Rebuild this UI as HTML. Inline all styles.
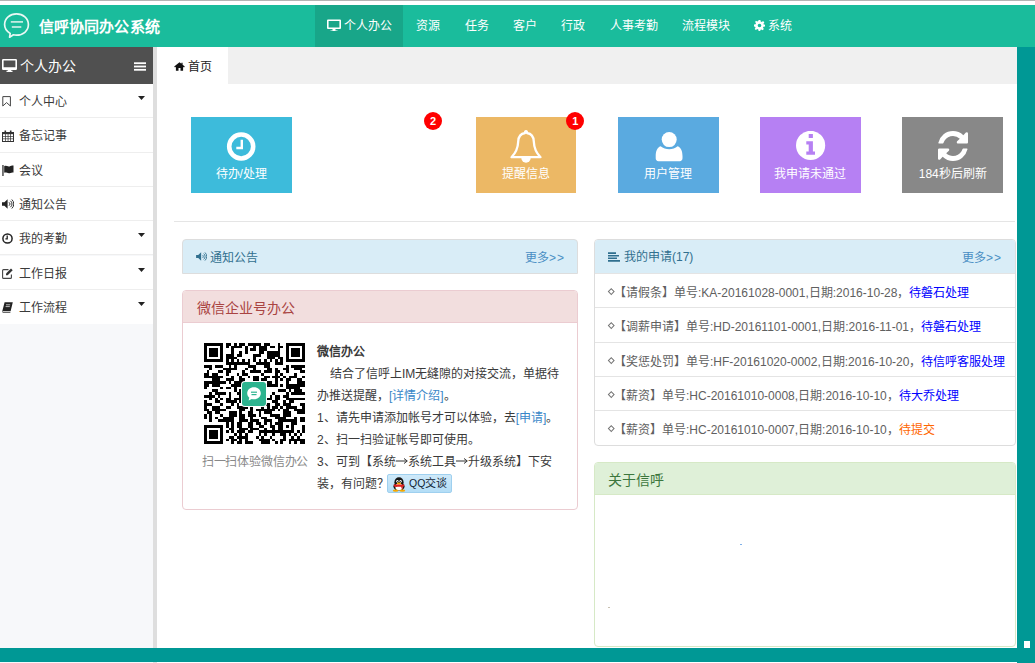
<!DOCTYPE html>
<html lang="zh-CN">
<head>
<meta charset="utf-8">
<style>
*{box-sizing:border-box;margin:0;padding:0}
html,body{width:1035px;height:663px;overflow:hidden;background:#fff;font-family:"Liberation Sans",sans-serif;font-size:12px;color:#333}
.abs{position:absolute}
#topline{left:0;top:0;width:1035px;height:1px;background:#b4b4b4}
#header{left:0;top:5px;width:1035px;height:42px;background:#1abc9c;color:#fff}
#rstrip{left:1017px;top:47px;width:18px;height:616px;background:#009895}
#bbar{left:0;top:648px;width:1017px;height:14px;background:#009895}
#side{left:0;top:47px;width:153px;height:616px;background:#f7f8fa}
#sidehd{left:0;top:47px;width:153px;height:37px;background:#505050;color:#fff}
#vstrip{left:153px;top:47px;width:4px;height:616px;background:#dedede}
#tabbar{left:157px;top:47px;width:860px;height:37px;background:#f0f0f0}
#tab1{left:157px;top:47px;width:71px;height:37px;background:#fff}
.item{position:absolute;left:0;width:153px;height:34.3px;background:#fff;border-bottom:1px solid #eee}
.tile{position:absolute;top:117.2px;width:100.8px;height:76px;color:#fff;text-align:center}
.badge{position:absolute;top:111.7px;width:18px;height:18px;border-radius:9px;background:#f00;color:#fff;font-weight:bold;font-size:11px;line-height:18px;text-align:center}
.panel{position:absolute;border:1px solid #ddd;border-radius:4px;background:#fff;overflow:hidden}
.ph{height:34px}
.more{top:1px;line-height:35px;color:#4a8fc4;font-size:12px;white-space:nowrap}
.gt{letter-spacing:1px;margin-right:-1px;font-size:12px}
.wx{line-height:22px;color:#3a3a3a;white-space:nowrap;font-size:12px}
.lk{color:#3a87c8}
.qqb{display:inline-block;vertical-align:middle;position:relative;left:-2px;top:-1px;height:19px;line-height:17px;padding:0 4px 0 21px;border:1px solid #9fd0ef;border-radius:2px;background:linear-gradient(#cfe9f9,#b3ddf6);color:#123;font-size:11px}
.li{position:absolute;left:0;width:100%;height:34.3px;border-top:1px solid #e4e4e4;line-height:38px;padding-left:19px;white-space:nowrap;font-size:12px;color:#606060}
.dm{position:absolute;left:14px;top:15px;width:4.5px;height:4.5px;border:1px solid #777;transform:rotate(45deg)}

.tlab{position:absolute;left:0;top:50px;width:100%;text-align:center;line-height:14px;font-size:12px;color:#fff;white-space:nowrap}
.itx{left:19px;top:0;height:34px;line-height:37px;font-size:12px;color:#3a3a3a;white-space:nowrap}
.nav{top:0;height:42px;line-height:42px;font-size:12px;color:#fff;white-space:nowrap}
</style>
</head>
<body>
<div id="topline" class="abs"></div>
<div id="header" class="abs">
<svg class="abs" style="left:0;top:-5px" width="36" height="47" viewBox="0 0 36 47">
<path d="M9.6 37.2 L10.2 33.4 C6.2 31.2 4.6 28 4.6 24.6 C4.6 18.2 10 13.9 16.5 13.9 C23 13.9 28.4 18.2 28.4 24.6 C28.4 31 23 35.2 16.5 35.2 C15.4 35.2 14.4 35.1 13.4 34.8 Z" fill="none" stroke="#eaf8f4" stroke-width="1.7" stroke-linejoin="round"/>
<rect x="10.8" y="21.1" width="12.2" height="1.6" fill="#d5f0ea"/>
<rect x="11.8" y="26.2" width="9.5" height="1.6" fill="#d5f0ea"/>
</svg>
<div class="abs" style="left:39px;top:1px;height:42px;line-height:42px;font-size:15px;font-weight:bold;letter-spacing:0.1px">信呼协同办公系统</div>
<div class="abs" style="left:315px;top:0;width:88px;height:42px;background:#18a689"></div>
<div class="abs nav" style="left:327px">
<svg width="14" height="12" viewBox="0 0 14 12" style="vertical-align:-1px"><path d="M1 0.5h12a1 1 0 0 1 1 1v7.5a1 1 0 0 1-1 1H8.5v1.5h2v0.8h-7v-0.8h2V10H1a1 1 0 0 1-1-1V1.5a1 1 0 0 1 1-1zM1.6 2v6.4h10.8V2z" fill="#fff"/></svg> 个人办公</div>
<div class="abs nav" style="left:416px">资源</div>
<div class="abs nav" style="left:465px">任务</div>
<div class="abs nav" style="left:513px">客户</div>
<div class="abs nav" style="left:561px">行政</div>
<div class="abs nav" style="left:610px">人事考勤</div>
<div class="abs nav" style="left:682px">流程模块</div>
<div class="abs nav" style="left:754px"><svg width="11" height="11" viewBox="0 0 12 12" style="vertical-align:-1px"><path d="M5 0h2l.3 1.7 1.2.5 1.4-1 1.4 1.4-1 1.4.5 1.2L12 5v2l-1.7.3-.5 1.2 1 1.4-1.4 1.4-1.4-1-1.2.5L7 12H5l-.3-1.7-1.2-.5-1.4 1L.7 9.9l1-1.4-.5-1.2L0 7V5l1.7-.3.5-1.2-1-1.4L2.1.7l1.4 1 1.2-.5zM6 4a2 2 0 1 0 0 4 2 2 0 0 0 0-4z" fill="#fff"/></svg> 系统</div>
</div>
<div id="side" class="abs"></div>
<div id="sidehd" class="abs">
<svg class="abs" style="left:2px;top:12px" width="15" height="13" viewBox="0 0 15 13"><path d="M1.2 0h12.6a1.2 1.2 0 0 1 1.2 1.2v8.6a1.2 1.2 0 0 1-1.2 1.2H9.2v0.8h1.3V13H4.5v-1.2h1.3V11H1.2A1.2 1.2 0 0 1 0 9.8V1.2A1.2 1.2 0 0 1 1.2 0zM1.6 1.4v6.8h11.8V1.4z" fill="#fff"/></svg>
<div class="abs" style="left:20px;top:1px;height:37px;line-height:37px;font-size:14px;color:#fff">个人办公</div>
<svg class="abs" style="left:134px;top:15px" width="12" height="9" viewBox="0 0 12 9"><rect x="0" y="0.3" width="12" height="1.8" fill="#fff"/><rect x="0" y="3.6" width="12" height="1.8" fill="#fff"/><rect x="0" y="6.9" width="12" height="1.8" fill="#fff"/></svg>
</div>
<div class="item" style="top:84.0px"><svg class="abs" style="left:2px;top:12px" width="10" height="11" viewBox="0 0 10 11"><path d="M.8 .6h7.6v9.4L4.6 6.6 .8 10z" fill="none" stroke="#444" stroke-width="1" stroke-linejoin="miter"/></svg><div class="abs itx">个人中心</div><svg class="abs" style="left:138px;top:12px" width="7" height="5" viewBox="0 0 7 5"><path d="M0 0h7L3.5 4z" fill="#222"/></svg></div>
<div class="item" style="top:118.3px"><svg class="abs" style="left:2px;top:12px" width="12" height="12" viewBox="0 0 12 12"><path d="M0 2h12v10H0z" fill="#333"/><path d="M2.5 0.5h1.6v2.5H2.5zM7.9 0.5h1.6v2.5H7.9z" fill="#333"/><g fill="#fff"><rect x="1" y="4.2" width="2.2" height="1.8"/><rect x="3.9" y="4.2" width="1.8" height="1.8"/><rect x="6.4" y="4.2" width="1.8" height="1.8"/><rect x="8.9" y="4.2" width="2.1" height="1.8"/><rect x="1" y="6.7" width="2.2" height="1.8"/><rect x="3.9" y="6.7" width="1.8" height="1.8"/><rect x="6.4" y="6.7" width="1.8" height="1.8"/><rect x="8.9" y="6.7" width="2.1" height="1.8"/><rect x="1" y="9.2" width="2.2" height="1.8"/><rect x="3.9" y="9.2" width="1.8" height="1.8"/><rect x="6.4" y="9.2" width="1.8" height="1.8"/><rect x="8.9" y="9.2" width="2.1" height="1.8"/></g></svg><div class="abs itx">备忘记事</div></div>
<div class="item" style="top:152.6px"><svg class="abs" style="left:2px;top:12px" width="12" height="11" viewBox="0 0 12 11"><rect x="0.3" y="0" width="1.3" height="11" fill="#333"/><path d="M2.2 1.2C4 0.2 5.5 1.8 7.5 1.4 9 1.1 10 0.4 11.5 0.6V7.4C10 7.4 9 8 7.5 8.2 5.5 8.5 4 7 2.2 7.8z" fill="#222"/></svg><div class="abs itx">会议</div></div>
<div class="item" style="top:186.9px"><svg class="abs" style="left:2px;top:12px" width="12" height="10" viewBox="0 0 12 10"><path d="M0 3.2h2.4L5.6 0.2v9.6L2.4 6.8H0z" fill="#222"/><path d="M7 3.3a2 2 0 0 1 0 3.4M8.4 1.8a4 4 0 0 1 0 6.4M9.8 0.5a6 6 0 0 1 0 9" fill="none" stroke="#333" stroke-width="1"/></svg><div class="abs itx">通知公告</div></div>
<div class="item" style="top:221.2px"><svg class="abs" style="left:2px;top:12px" width="11" height="11" viewBox="0 0 11 11"><circle cx="5.5" cy="5.5" r="4.6" fill="none" stroke="#222" stroke-width="1.5"/><path d="M5.2 2.6v3.3H3.4" fill="none" stroke="#222" stroke-width="1.3"/></svg><div class="abs itx">我的考勤</div><svg class="abs" style="left:138px;top:12px" width="7" height="5" viewBox="0 0 7 5"><path d="M0 0h7L3.5 4z" fill="#222"/></svg></div>
<div class="item" style="top:255.5px"><svg class="abs" style="left:2px;top:12px" width="11" height="11" viewBox="0 0 11 11"><path d="M6.5 1.6H1.5A1 1 0 0 0 .6 2.6v6.8a1 1 0 0 0 1 1h6.8a1 1 0 0 0 1-1V6.4" fill="none" stroke="#444" stroke-width="1.1"/><path d="M9 .5l1.7 1.7-5 5H4V5.5z" fill="#333"/></svg><div class="abs itx">工作日报</div><svg class="abs" style="left:138px;top:12px" width="7" height="5" viewBox="0 0 7 5"><path d="M0 0h7L3.5 4z" fill="#222"/></svg></div>
<div class="item" style="top:289.8px;border-bottom:none"><svg class="abs" style="left:2px;top:12px" width="11" height="11" viewBox="0 0 11 11"><path d="M2.6 0.3h8.2L8.6 9.2H1.2A1.3 1.3 0 0 0 .3 10.6L.2 9.4z" fill="#222"/><path d="M.6 10.7h7.8" stroke="#333" stroke-width=".9"/><path d="M4 2.8h4.2M3.6 4.6h4.2" stroke="#fff" stroke-width=".7"/></svg><div class="abs itx">工作流程</div><svg class="abs" style="left:138px;top:12px" width="7" height="5" viewBox="0 0 7 5"><path d="M0 0h7L3.5 4z" fill="#222"/></svg></div>
<div id="vstrip" class="abs"></div>
<div id="tabbar" class="abs"></div>
<div id="tab1" class="abs">
<svg class="abs" style="left:17px;top:15px" width="11" height="9" viewBox="0 0 11 9"><path d="M5.5 0.2L0.2 4.6l.8.9 .9-.8V8.8h2.6V6h2V8.8h2.6V4.7l.9.8.8-.9L8.6 2.8V.8H7.4v1z" fill="#111"/></svg>
<div class="abs" style="left:31px;top:1px;height:37px;line-height:38px;font-size:12px;color:#222">首页</div>
</div>
<div class="abs" style="left:174px;top:221px;width:841px;height:1px;background:#e5e5e5"></div>

<div class="tile" style="left:190.9px;background:#3dbbdb"><svg class="abs" style="left:35px;top:15px" width="30" height="30" viewBox="0 0 30 30"><circle cx="15.2" cy="14.5" r="12" fill="none" stroke="#fff" stroke-width="4.6"/><path d="M15.8 7.8v8.2H10.3" fill="none" stroke="#fff" stroke-width="2.4"/></svg><div class="tlab">待办/处理</div></div>
<div class="badge" style="left:424px">2</div>
<div class="tile" style="left:475.5px;background:#ecb865"><svg class="abs" style="left:33px;top:12px" width="34" height="36" viewBox="0 0 34 36"><path d="M17 2.2c-1 0-1 1.2-1 1.8C11 4.8 9.4 8 9.2 12.5 9 18 8.2 22.5 2.5 28.2h29C25.8 22.5 25 18 24.8 12.5 24.6 8 23 4.8 18 4c0-.6 0-1.8-1-1.8z" fill="none" stroke="#fff" stroke-width="2.3" stroke-linejoin="round"/><path d="M12.3 29a4.7 4.7 0 0 0 9.4 0z" fill="#fff"/></svg><div class="tlab">提醒信息</div></div>
<div class="badge" style="left:566.3px">1</div>
<div class="tile" style="left:617.8px;background:#5aaae0"><svg class="abs" style="left:37px;top:13px" width="28" height="32" viewBox="0 0 28 32"><circle cx="14.2" cy="9.6" r="7.5" fill="#fff"/><path d="M5.6 16.2C2 17.4 0.7 21.5 0.7 26v2.2c0 1.6 1.1 3 2.7 3h21.4c1.6 0 2.7-1.4 2.7-3V26c0-4.5-1.3-8.6-4.9-9.8-2.2 1.9-5.3 3-8.4 3s-6.2-1.1-8.6-3z" fill="#fff"/></svg><div class="tlab">用户管理</div></div>
<div class="tile" style="left:760.1px;background:#b680f3"><svg class="abs" style="left:35px;top:14px" width="32" height="32" viewBox="0 0 32 32"><circle cx="15.6" cy="14.4" r="14.6" fill="#fff"/><path d="M13.7 3h4.2v3.9h-4.2zM11.3 10.2h6.6v10.3h2.1v3.3h-8.7v-3.3h2.4v-7h-2.4z" fill="#b680f3"/></svg><div class="tlab">我申请未通过</div></div>
<div class="tile" style="left:902.4px;background:#888"><svg class="abs" style="left:36px;top:14px" width="30" height="30" viewBox="0 0 1536 1536"><g transform="translate(0,1408) scale(1,-1)"><path d="M1511 480q0 -5 -1 -7q-64 -268 -268 -434.5t-478 -166.5q-146 0 -282.5 55t-243.5 157l-129 -129q-19 -19 -45 -19t-45 19t-19 45v448q0 26 19 45t45 19h448q26 0 45 -19t19 -45t-19 -45l-137 -137q71 -66 161 -102t187 -36q134 0 250 65t186 179q11 17 53 117q8 23 30 23h192q13 0 22.5 -9.5t9.5 -22.5zM1536 1280v-448q0 -26 -19 -45t-45 -19h-448q-26 0 -45 19t-19 45t19 45l138 138q-148 137 -349 137q-134 0 -250 -65t-186 -179q-11 -17 -53 -117q-8 -23 -30 -23h-199q-13 0 -22.5 9.5t-9.5 22.5v7q65 268 270 434.5t480 166.5q146 0 284 -55.5t245 -156.5l130 129q19 19 45 19t45 -19t19 -45z" fill="#fff"/></g></svg><div class="tlab">184秒后刷新</div></div>

<div class="panel" style="left:182px;top:239px;width:396px;height:35px;border-color:#ddd;background:#d9edf7;border-radius:4px 4px 0 0"><svg class="abs" style="left:13px;top:12px" width="11" height="9" viewBox="0 0 12 10"><path d="M0 3.2h2.4L5.6 0.2v9.6L2.4 6.8H0z" fill="#31708f"/><path d="M7 3.3a2 2 0 0 1 0 3.4M8.4 1.8a4 4 0 0 1 0 6.4M9.8 0.5a6 6 0 0 1 0 9" fill="none" stroke="#31708f" stroke-width="1"/></svg><div class="abs" style="left:27px;top:1px;line-height:35px;color:#31708f">通知公告</div><div class="abs more" style="right:13px">更多<span class="gt">&gt;&gt;</span></div></div>
<div class="panel" style="left:182px;top:290px;width:396px;height:220px;border-color:#ebccd1"><div class="ph" style="background:#f2dede;height:32px;border-bottom:1px solid #ebccd1"><div class="abs" style="left:14px;top:1px;line-height:33px;font-size:14px;color:#a94442">微信企业号办公</div></div>
<div id="qr" class="abs" style="left:21px;top:52px;width:101px;height:101px"><svg width="101" height="101" viewBox="0 0 37 37" shape-rendering="crispEdges"><path d="M0 0h7v1h-7zM8 0h2v1h-2zM11 0h1v1h-1zM13 0h2v1h-2zM16 0h5v1h-5zM22 0h2v1h-2zM27 0h1v1h-1zM30 0h7v1h-7zM0 1h1v1h-1zM6 1h1v1h-1zM8 1h1v1h-1zM10 1h4v1h-4zM15 1h1v1h-1zM18 1h1v1h-1zM20 1h3v1h-3zM24 1h2v1h-2zM27 1h2v1h-2zM30 1h1v1h-1zM36 1h1v1h-1zM0 2h1v1h-1zM2 2h3v1h-3zM6 2h1v1h-1zM10 2h1v1h-1zM15 2h1v1h-1zM17 2h2v1h-2zM20 2h3v1h-3zM27 2h1v1h-1zM30 2h1v1h-1zM32 2h3v1h-3zM36 2h1v1h-1zM0 3h1v1h-1zM2 3h3v1h-3zM6 3h1v1h-1zM10 3h1v1h-1zM13 3h1v1h-1zM15 3h1v1h-1zM20 3h2v1h-2zM23 3h5v1h-5zM30 3h1v1h-1zM32 3h3v1h-3zM36 3h1v1h-1zM0 4h1v1h-1zM2 4h3v1h-3zM6 4h1v1h-1zM8 4h3v1h-3zM12 4h2v1h-2zM18 4h3v1h-3zM23 4h5v1h-5zM30 4h1v1h-1zM32 4h3v1h-3zM36 4h1v1h-1zM0 5h1v1h-1zM6 5h1v1h-1zM8 5h4v1h-4zM18 5h1v1h-1zM23 5h3v1h-3zM27 5h2v1h-2zM30 5h1v1h-1zM36 5h1v1h-1zM0 6h7v1h-7zM8 6h1v1h-1zM10 6h1v1h-1zM12 6h1v1h-1zM14 6h1v1h-1zM16 6h1v1h-1zM18 6h1v1h-1zM20 6h1v1h-1zM22 6h1v1h-1zM24 6h1v1h-1zM26 6h1v1h-1zM28 6h1v1h-1zM30 6h7v1h-7zM8 7h9v1h-9zM19 7h5v1h-5zM26 7h3v1h-3zM0 8h3v1h-3zM4 8h3v1h-3zM9 8h1v1h-1zM11 8h1v1h-1zM16 8h3v1h-3zM22 8h2v1h-2zM30 8h1v1h-1zM32 8h5v1h-5zM2 9h1v1h-1zM7 9h5v1h-5zM15 9h1v1h-1zM18 9h1v1h-1zM23 9h2v1h-2zM26 9h1v1h-1zM29 9h2v1h-2zM33 9h3v1h-3zM1 10h1v1h-1zM5 10h2v1h-2zM8 10h2v1h-2zM14 10h1v1h-1zM17 10h4v1h-4zM22 10h3v1h-3zM26 10h2v1h-2zM30 10h1v1h-1zM35 10h2v1h-2zM0 11h2v1h-2zM3 11h2v1h-2zM8 11h1v1h-1zM12 11h1v1h-1zM14 11h2v1h-2zM21 11h1v1h-1zM26 11h1v1h-1zM28 11h1v1h-1zM33 11h1v1h-1zM0 12h7v1h-7zM10 12h1v1h-1zM13 12h1v1h-1zM16 12h1v1h-1zM18 12h2v1h-2zM22 12h2v1h-2zM25 12h3v1h-3zM29 12h1v1h-1zM31 12h3v1h-3zM36 12h1v1h-1zM3 13h3v1h-3zM8 13h3v1h-3zM13 13h2v1h-2zM18 13h2v1h-2zM21 13h2v1h-2zM26 13h1v1h-1zM28 13h1v1h-1zM30 13h2v1h-2zM34 13h2v1h-2zM0 14h8v1h-8zM9 14h1v1h-1zM11 14h5v1h-5zM18 14h2v1h-2zM21 14h1v1h-1zM23 14h2v1h-2zM26 14h1v1h-1zM30 14h1v1h-1zM34 14h3v1h-3zM0 15h2v1h-2zM3 15h3v1h-3zM10 15h7v1h-7zM20 15h1v1h-1zM22 15h5v1h-5zM28 15h1v1h-1zM30 15h7v1h-7zM0 16h1v1h-1zM6 16h1v1h-1zM8 16h2v1h-2zM11 16h1v1h-1zM14 16h1v1h-1zM20 16h1v1h-1zM30 16h5v1h-5zM3 17h2v1h-2zM11 17h1v1h-1zM13 17h3v1h-3zM17 17h1v1h-1zM20 17h3v1h-3zM27 17h3v1h-3zM31 17h1v1h-1zM33 17h3v1h-3zM2 18h1v1h-1zM4 18h4v1h-4zM9 18h1v1h-1zM12 18h2v1h-2zM16 18h3v1h-3zM20 18h1v1h-1zM22 18h1v1h-1zM25 18h1v1h-1zM30 18h1v1h-1zM32 18h5v1h-5zM0 19h4v1h-4zM5 19h1v1h-1zM9 19h1v1h-1zM13 19h3v1h-3zM18 19h5v1h-5zM24 19h1v1h-1zM26 19h2v1h-2zM29 19h2v1h-2zM2 20h1v1h-1zM4 20h1v1h-1zM6 20h1v1h-1zM8 20h2v1h-2zM11 20h4v1h-4zM17 20h1v1h-1zM19 20h1v1h-1zM21 20h4v1h-4zM26 20h2v1h-2zM30 20h7v1h-7zM0 21h1v1h-1zM4 21h2v1h-2zM8 21h4v1h-4zM13 21h1v1h-1zM17 21h5v1h-5zM25 21h2v1h-2zM29 21h1v1h-1zM31 21h2v1h-2zM0 22h3v1h-3zM6 22h1v1h-1zM10 22h1v1h-1zM12 22h1v1h-1zM14 22h1v1h-1zM17 22h3v1h-3zM22 22h2v1h-2zM26 22h2v1h-2zM29 22h3v1h-3zM35 22h2v1h-2zM0 23h1v1h-1zM3 23h3v1h-3zM8 23h2v1h-2zM12 23h4v1h-4zM17 23h1v1h-1zM21 23h1v1h-1zM23 23h1v1h-1zM25 23h2v1h-2zM28 23h1v1h-1zM30 23h4v1h-4zM36 23h1v1h-1zM0 24h2v1h-2zM3 24h5v1h-5zM13 24h2v1h-2zM17 24h1v1h-1zM19 24h7v1h-7zM27 24h1v1h-1zM29 24h2v1h-2zM33 24h4v1h-4zM1 25h2v1h-2zM4 25h2v1h-2zM9 25h3v1h-3zM13 25h1v1h-1zM16 25h2v1h-2zM20 25h1v1h-1zM22 25h3v1h-3zM29 25h3v1h-3zM34 25h3v1h-3zM0 26h1v1h-1zM2 26h1v1h-1zM6 26h1v1h-1zM9 26h3v1h-3zM13 26h2v1h-2zM16 26h3v1h-3zM20 26h1v1h-1zM24 26h4v1h-4zM29 26h3v1h-3zM0 27h1v1h-1zM2 27h1v1h-1zM4 27h1v1h-1zM7 27h4v1h-4zM13 27h2v1h-2zM17 27h1v1h-1zM21 27h2v1h-2zM26 27h4v1h-4zM33 27h1v1h-1zM35 27h2v1h-2zM2 28h1v1h-1zM5 28h6v1h-6zM13 28h3v1h-3zM17 28h3v1h-3zM22 28h3v1h-3zM27 28h7v1h-7zM35 28h2v1h-2zM8 29h1v1h-1zM10 29h1v1h-1zM12 29h2v1h-2zM16 29h2v1h-2zM19 29h2v1h-2zM22 29h1v1h-1zM24 29h1v1h-1zM26 29h3v1h-3zM32 29h2v1h-2zM0 30h7v1h-7zM8 30h1v1h-1zM10 30h1v1h-1zM12 30h2v1h-2zM16 30h2v1h-2zM20 30h2v1h-2zM24 30h2v1h-2zM27 30h2v1h-2zM30 30h1v1h-1zM32 30h1v1h-1zM36 30h1v1h-1zM0 31h1v1h-1zM6 31h1v1h-1zM9 31h2v1h-2zM13 31h3v1h-3zM17 31h3v1h-3zM22 31h1v1h-1zM25 31h1v1h-1zM27 31h2v1h-2zM32 31h1v1h-1zM36 31h1v1h-1zM0 32h1v1h-1zM2 32h3v1h-3zM6 32h1v1h-1zM8 32h1v1h-1zM10 32h1v1h-1zM12 32h3v1h-3zM16 32h2v1h-2zM20 32h13v1h-13zM34 32h1v1h-1zM36 32h1v1h-1zM0 33h1v1h-1zM2 33h3v1h-3zM6 33h1v1h-1zM11 33h1v1h-1zM13 33h1v1h-1zM15 33h1v1h-1zM20 33h1v1h-1zM22 33h1v1h-1zM25 33h1v1h-1zM28 33h2v1h-2zM31 33h1v1h-1zM33 33h1v1h-1zM35 33h1v1h-1zM0 34h1v1h-1zM2 34h3v1h-3zM6 34h1v1h-1zM9 34h2v1h-2zM12 34h4v1h-4zM19 34h1v1h-1zM21 34h1v1h-1zM24 34h1v1h-1zM29 34h1v1h-1zM32 34h1v1h-1zM34 34h1v1h-1zM0 35h1v1h-1zM6 35h1v1h-1zM8 35h1v1h-1zM10 35h2v1h-2zM13 35h1v1h-1zM15 35h1v1h-1zM20 35h4v1h-4zM25 35h1v1h-1zM28 35h2v1h-2zM31 35h6v1h-6zM0 36h7v1h-7zM10 36h1v1h-1zM12 36h2v1h-2zM15 36h3v1h-3zM21 36h3v1h-3zM26 36h1v1h-1zM28 36h1v1h-1zM31 36h1v1h-1zM33 36h1v1h-1zM35 36h2v1h-2z" fill="#000"/></svg><div class="abs" style="left:37px;top:38px;width:26px;height:26px;border-radius:4px;background:#fff"></div><div class="abs" style="left:38px;top:39px;width:24px;height:24px;border-radius:3px;background:#2db48f"><svg class="abs" style="left:3px;top:3px" width="18" height="18" viewBox="0 0 18 18"><path d="M9 2.2c3.9 0 6.8 2.6 6.8 6s-2.9 6-6.8 6c-.8 0-1.5-.1-2.2-.3L3.6 15.6l.7-2.9C3 11.6 2.2 10 2.2 8.2 2.2 4.8 5.1 2.2 9 2.2z" fill="#fff"/><rect x="6" y="6.6" width="6" height="1.2" fill="#2db48f"/><rect x="6.5" y="9" width="5" height="1.2" fill="#2db48f"/></svg></div></div>
<div class="abs" style="left:18px;top:160px;width:108px;text-align:center;line-height:22px;color:#888;white-space:nowrap;letter-spacing:-0.15px">扫一扫体验微信办公</div>
<div class="abs wx" style="left:134px;top:50px">
<div style="font-weight:bold">微信办公</div>
<div style="padding-left:13px">结合了信呼上IM无缝隙的对接交流，单据待</div>
<div>办推送提醒，<span class="lk">[详情介绍]</span>。</div>
<div>1、请先申请添加帐号才可以体验，去<span class="lk">[申请]</span>。</div>
<div>2、扫一扫验证帐号即可使用。</div>
<div>3、可到【系统<svg width="12" height="8" viewBox="0 0 12 8" style="vertical-align:1px"><path d="M0 4h10.5" stroke="#333" stroke-width="1"/><path d="M8 1.5l3.3 2.5L8 6.5" fill="none" stroke="#333" stroke-width="1"/></svg>系统工具<svg width="12" height="8" viewBox="0 0 12 8" style="vertical-align:1px"><path d="M0 4h10.5" stroke="#333" stroke-width="1"/><path d="M8 1.5l3.3 2.5L8 6.5" fill="none" stroke="#333" stroke-width="1"/></svg>升级系统】下安</div>
<div>装，有问题？<span class="qqb"><svg class="abs" style="left:3.5px;top:1.5px" width="14" height="15" viewBox="0 0 14 15"><ellipse cx="7" cy="5.2" rx="4.6" ry="5" fill="#151515"/><ellipse cx="7" cy="9.6" rx="5.6" ry="4.2" fill="#151515"/><ellipse cx="7" cy="10" rx="3.6" ry="3.4" fill="#fff"/><ellipse cx="5.4" cy="4.3" rx="1.1" ry="1.4" fill="#fff"/><ellipse cx="8.6" cy="4.3" rx="1.1" ry="1.4" fill="#fff"/><circle cx="5.6" cy="4.6" r=".5" fill="#000"/><circle cx="8.4" cy="4.6" r=".5" fill="#000"/><ellipse cx="7" cy="6.4" rx="2.2" ry="1" fill="#f5a800"/><path d="M1.6 7.6h10.8l-.4 1.9c-1.8.7-3.2.3-5 .3s-3.2.4-5-.3z" fill="#e01e1e"/><path d="M9.8 9l1.6 2.8-2.3-.6z" fill="#e01e1e"/><ellipse cx="3.6" cy="13.6" rx="2.8" ry="1.2" fill="#f5a800"/><ellipse cx="10.4" cy="13.6" rx="2.8" ry="1.2" fill="#f5a800"/></svg><span style="font-size:10.5px">QQ</span>交谈</span></div>
</div></div>
<div class="panel" style="left:594px;top:239px;width:422px;height:207px;border-color:#ddd"><div class="ph" style="background:#d9edf7;border-bottom:1px solid #ddd;height:34px"><svg class="abs" style="left:13px;top:12px" width="12" height="10" viewBox="0 0 12 10"><path d="M0 0.2h8v1.7H0zM0 2.9h11v1.5H0zM0 5.5h9v1.6H0zM0 8.1h12v1.7H0z" fill="#2f6f8f"/></svg><div class="abs" style="left:29px;top:0;line-height:35px;color:#31708f">我的申请(17)</div><div class="abs more" style="right:14px">更多<span class="gt">&gt;&gt;</span></div></div><div class="li" style="top:33.0px"><span class="dm"></span><span class="lt">【请假条】单号:KA-20161028-0001,日期:2016-10-28，</span><span style="color:#00f">待磐石处理</span></div><div class="li" style="top:67.3px"><span class="dm"></span><span class="lt">【调薪申请】单号:HD-20161101-0001,日期:2016-11-01，</span><span style="color:#00f">待磐石处理</span></div><div class="li" style="top:101.6px"><span class="dm"></span><span class="lt">【奖惩处罚】单号:HF-20161020-0002,日期:2016-10-20，</span><span style="color:#00f">待信呼客服处理</span></div><div class="li" style="top:135.9px"><span class="dm"></span><span class="lt">【薪资】单号:HC-20161010-0008,日期:2016-10-10，</span><span style="color:#00f">待大乔处理</span></div><div class="li" style="top:170.2px"><span class="dm"></span><span class="lt">【薪资】单号:HC-20161010-0007,日期:2016-10-10，</span><span style="color:#ff6600">待提交</span></div></div>
<div class="panel" style="left:594px;top:462px;width:422px;height:185px;border-color:#d6e9c6"><div class="ph" style="background:#dff0d8;height:32px;border-bottom:1px solid #d6e9c6"><div class="abs" style="left:13px;top:0;line-height:34px;font-size:14px;color:#3c763d">关于信呼</div></div></div>

<div class="abs" style="left:739.5px;top:544px;width:2px;height:1px;background:#7fb0e8"></div><div class="abs" style="left:608px;top:607px;width:1.5px;height:1px;background:#c8c0b0"></div>
<div id="rstrip" class="abs"></div>
<div id="bbar" class="abs"></div>
<div class="abs" style="left:1024px;top:641px;width:6px;height:7px;background:#fff"></div>
</body>
</html>
